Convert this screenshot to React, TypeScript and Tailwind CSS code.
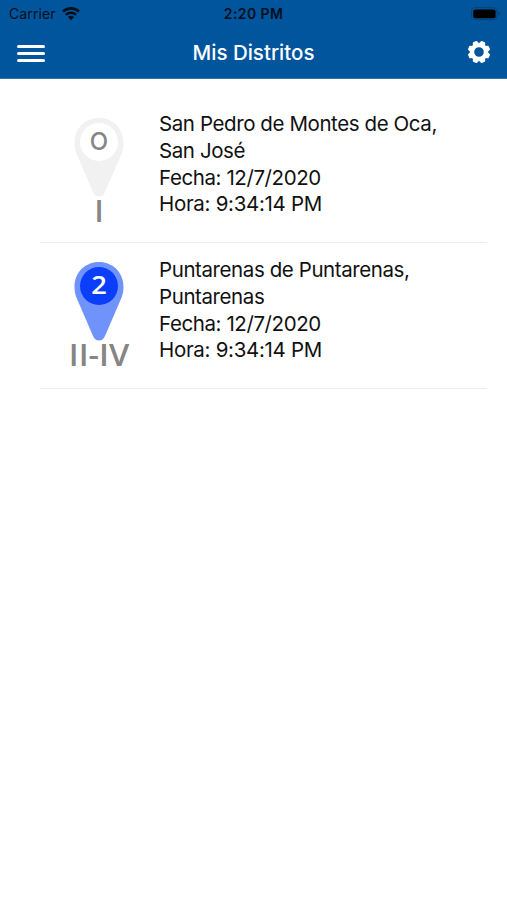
type District = {
  lines: string[];
  count: string;
  label: string;
  labelWidth: number;
  active: boolean;
};

const districts: District[] = [
  {
    lines: ["San Pedro de Montes de Oca,", "San José"],
    count: "O",
    label: "I",
    labelWidth: 0,
    active: false,
  },
  {
    lines: ["Puntarenas de Puntarenas,", "Puntarenas"],
    count: "2",
    label: "II-IV",
    labelWidth: 60.5,
    active: true,
  },
];

function WifiIcon() {
  return (
    <svg width="18" height="14" viewBox="0 0 18 14" fill="none" stroke="#03101c">
      <path d="M1 4.6A11.6 11.6 0 0 1 17 4.6" strokeWidth="2.6" />
      <path d="M3.9 7.8A7.4 7.4 0 0 1 14.1 7.8" strokeWidth="2.4" />
      <path d="M6 10.1A4.2 4.2 0 0 1 12 10.1L9 13.2Z" fill="#03101c" stroke="none" />
    </svg>
  );
}

function BatteryIcon() {
  return (
    <svg width="30" height="14" viewBox="0 0 30 14">
      <rect x="0.5" y="0.7" width="25.5" height="12" rx="3.4" fill="none" stroke="#034378" />
      <rect x="2.2" y="2.4" width="22.4" height="8.8" rx="2" fill="#000" />
      <path d="M27.2 4.6q1.7 .6 1.7 2.1t-1.7 2.1z" fill="#034378" />
    </svg>
  );
}

function GearIcon() {
  const teeth = [0, 45, 90, 135, 180, 225, 270, 315];
  return (
    <svg width="24" height="24" viewBox="-12 -12 24 24">
      <circle r="7" fill="none" stroke="#fff" strokeWidth="4.4" />
      {teeth.map((angle) => (
        <path
          key={angle}
          d="M-3.4 -7.6L-2.3 -10.6Q-2.1 -11.2 -1.5 -11.2H1.5Q2.1 -11.2 2.3 -10.6L3.4 -7.6Z"
          fill="#fff"
          transform={`rotate(${angle + 22.5})`}
        />
      ))}
    </svg>
  );
}

function Pin({ district }: { district: District }) {
  const { active, count, label, labelWidth } = district;
  return (
    <svg width="80" height="120" viewBox="0 0 80 120" className="shrink-0">
      <path
        d="M40 3C26 3 15.5 13.6 15.5 28C15.5 33 16.6 37 18.5 41L34 77Q36 81.5 40 81.5Q44 81.5 46 77L61.5 41C63.4 37 64.5 33 64.5 28C64.5 13.6 54 3 40 3Z"
        fill={active ? "#6f93fb" : "#f1f1f1"}
      />
      <circle cx="40" cy="27" r="19" fill={active ? "#0b3efb" : "#fff"} />
      <text
        x="40"
        y="34.8"
        textAnchor="middle"
        fontSize={active ? 25.5 : 24.5}
        textLength={active ? 15.6 : 18.4}
        lengthAdjust="spacingAndGlyphs"
        className={
          active
            ? "fill-white font-['Open_Sans','Noto_Sans',sans-serif] font-semibold"
            : "fill-[#858585] font-['Inter',sans-serif] font-medium"
        }
      >
        {count}
      </text>
      <text
        x="40"
        y="106.7"
        textAnchor="middle"
        fontSize="30"
        textLength={labelWidth || undefined}
        lengthAdjust="spacingAndGlyphs"
        className="fill-[#858585] font-['Open_Sans',sans-serif] font-semibold"
      >
        {label}
      </text>
    </svg>
  );
}

function DistrictRow({ district }: { district: District }) {
  return (
    <li className="flex h-[146px] border-b border-[#ececec] pt-[18px]">
      <div className={district.active ? "-mt-[2px] w-[119px] pl-[19px]" : "w-[119px] pl-[19px]"}>
        <Pin district={district} />
      </div>
      <div className="-mt-[4px] text-[20.5px] leading-[26.8px] tracking-[-0.41px] text-[#111]">
        {district.lines.map((line) => (
          <p key={line}>{line}</p>
        ))}
        <p>Fecha: 12/7/2020</p>
        <p className="tracking-[-0.3px]">Hora: 9:34:14 PM</p>
      </div>
    </li>
  );
}

export default function App() {
  return (
    <div className="min-h-screen bg-white font-['Inter','Liberation_Sans',sans-serif]">
      <header className="h-[79px] border-b border-[#2c77b3] bg-[#00559c]">
        <div className="grid h-[27px] grid-cols-3 items-center px-[6px] text-[#03101c]">
          <div className="flex items-center gap-[6px] pl-[3px] text-[14px] tracking-[0.1px]">
            <span>Carrier</span>
            <WifiIcon />
          </div>
          <span className="text-center text-[14px] font-semibold tracking-[0.4px]">2:20 PM</span>
          <div className="flex justify-end">
            <BatteryIcon />
          </div>
        </div>
        <div className="grid h-[50px] grid-cols-[48px_1fr_48px] items-center text-white">
          <button aria-label="Menú" className="flex flex-col gap-[4px] pl-[17px] pt-[2px]">
            <span className="h-[3px] w-[28px] rounded-full bg-white" />
            <span className="h-[3px] w-[28px] rounded-full bg-white" />
            <span className="h-[3px] w-[28px] rounded-full bg-white" />
          </button>
          <h1 className="pt-[2px] text-center text-[20.5px] font-medium">Mis Distritos</h1>
          <button aria-label="Ajustes" className="flex pl-[7.5px]">
            <GearIcon />
          </button>
        </div>
      </header>
      <ul className="ml-[40px] mr-[20px] pt-[18px]">
        {districts.map((district) => (
          <DistrictRow key={district.label} district={district} />
        ))}
      </ul>
    </div>
  );
}
